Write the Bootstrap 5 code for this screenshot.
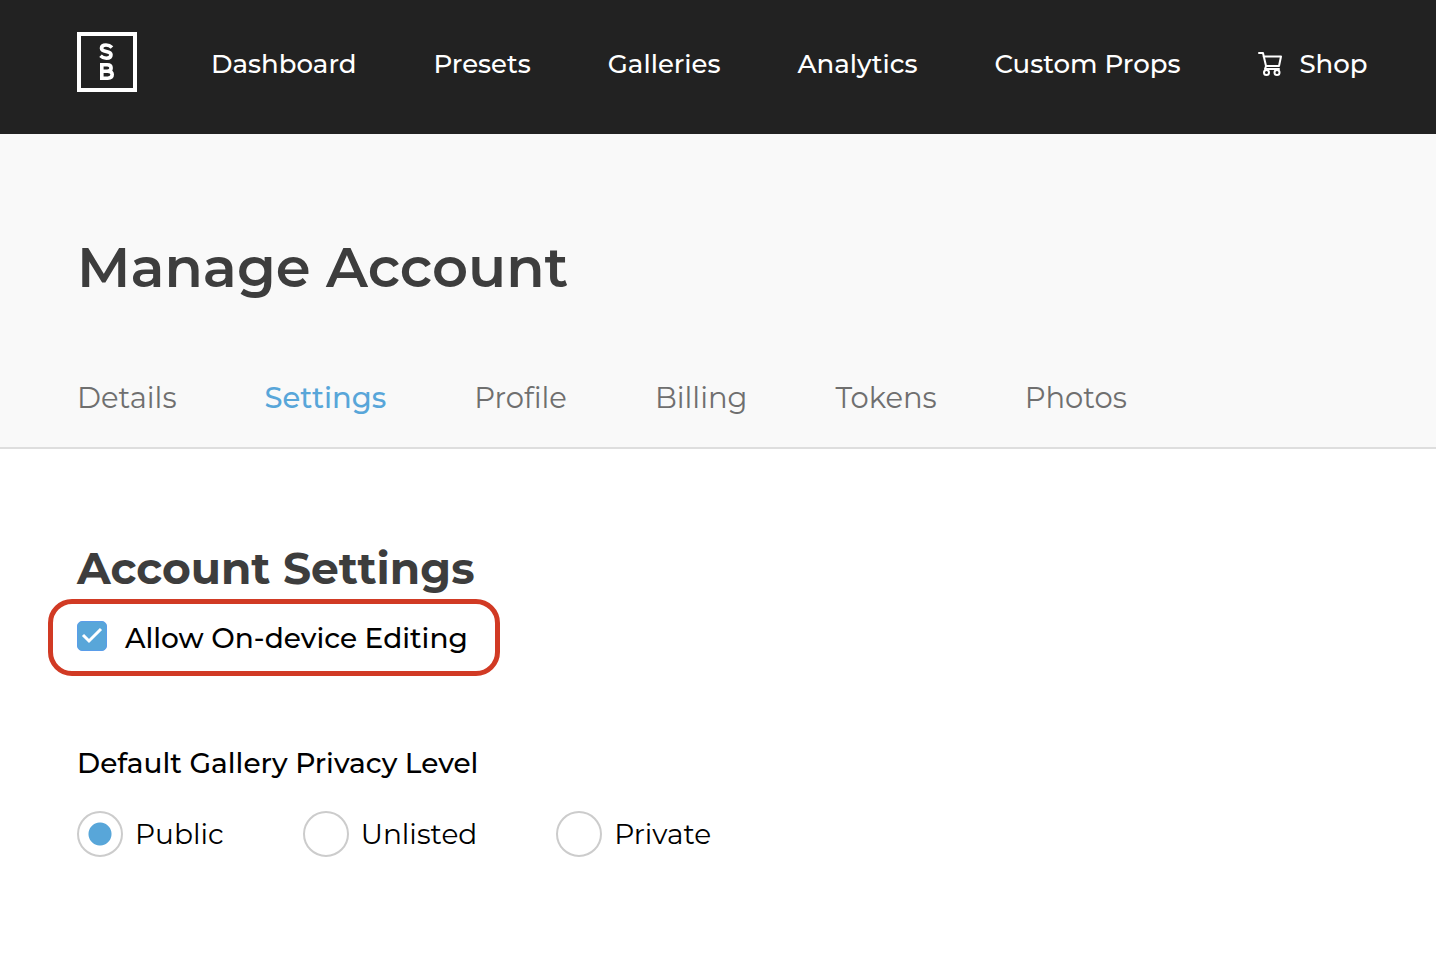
<!DOCTYPE html>
<html lang="en">
<head>
<meta charset="utf-8">
<meta name="viewport" content="width=device-width, initial-scale=1">
<title>Manage Account</title>
<link href="https://cdn.jsdelivr.net/npm/bootstrap@5.3.0/dist/css/bootstrap.min.css" rel="stylesheet">
<style>
  body { font-family: Montserrat, Inter, sans-serif; font-size: 28px; line-height: 36px; color: #000; background: #fff; }
  .gutter { padding-left: 77px; padding-right: 60px; }
  .topbar { background: #222; height: 134px; padding-bottom: 10px; }
  .topbar a { color: #fff; text-decoration: none; white-space: nowrap; }
  .main-links { gap: 77px; margin-left: 74px; padding-top: 4px; font-size: 26px; font-weight: 500; }
  .page-head { background: #f9f9f9; border-bottom: 2px solid #dedede; padding-top: 97px; }
  .page-head h1 { font-size: 56px; line-height: 72px; font-weight: 600; color: #3d3d3d; margin-bottom: 71px; }
  .tabs { gap: 88px; padding-bottom: 25px; font-size: 29px; line-height: 48px; }
  .tabs a { color: #6f6f6f; text-decoration: none; }
  .tabs a.active { color: #58a6d9; font-weight: 500; }
  .settings { padding-top: 92px; }
  .settings h2 { font-size: 44px; line-height: 54px; font-weight: 700; color: #3d3d3d; margin: 0 0 4px; }
  .callout { border: 5px solid #d13a24; border-radius: 24px; width: 452px; height: 77px; margin-left: -29px; padding-left: 24px; font-weight: 500; }
  .callout .form-check-input { width: 30px; height: 30px; margin: 0 18px 4px 0; border-radius: 5px; }
  .callout .form-check-input:checked { background-color: #58a6d9; border-color: #5a9dea; background-size: 30px 30px;
    background-image: url("data:image/svg+xml,%3csvg xmlns='http://www.w3.org/2000/svg' viewBox='0 0 30 30'%3e%3cpath fill='none' stroke='%23fff' stroke-width='3' d='M6 14l6 6L24 8'/%3e%3c/svg%3e"); }
  .privacy { margin-top: 69px; }
  .privacy legend { font-size: 28px; line-height: 36px; font-weight: 500; margin-bottom: 30px; }
  .choices { gap: 79px; }
  .choices .form-check-input { width: 46px; height: 46px; margin: 0 12px 0 0; border: 2px solid #ccc; }
  .choices .form-check-input:checked { background: radial-gradient(circle, #58a6d9 11px, #fff 12px); }
</style>
</head>
<body>
<header class="topbar gutter d-flex align-items-center">
  <a href="#" aria-label="Home">
    <svg class="d-block" width="60" height="60" viewBox="0 0 60 60" aria-hidden="true">
      <rect x="2" y="2" width="56" height="56" fill="none" stroke="#fff" stroke-width="4"/>
      <g fill="none" stroke="#fff" stroke-width="3.600">
        <path d="M35 15.500C33 13.500 31 13 29 13c-3 0-4.500 1.400-4.500 3.300 0 4.700 9.500 1.700 9.500 6.500 0 2.200-1.900 3.400-4.700 3.400-2.300 0-4.300-.9-5.800-2.400"/>
        <path d="M24.800 32.700v13.500h6c2.700 0 4.400-1.300 4.400-3.600 0-2.100-1.700-3.400-4.400-3.400h-6 5.400c2.400 0 3.900-1.200 3.900-3.200s-1.500-3.300-3.900-3.300z"/>
      </g>
    </svg>
  </a>
  <nav class="main-links d-flex" aria-label="Main">
    <a href="#">Dashboard</a>
    <a href="#">Presets</a>
    <a href="#">Galleries</a>
    <a href="#">Analytics</a>
    <a href="#">Custom Props</a>
    <a href="#" class="d-flex align-items-center">
      <svg class="me-3" width="26" height="26" viewBox="0 0 26 26" fill="none" stroke="#fff" stroke-width="2" stroke-linecap="round" stroke-linejoin="round" aria-hidden="true">
        <path d="M2 2h4l3 13-1 3h14M6.500 5.500H24l-2 9.500H9"/>
        <circle cx="9.500" cy="21.500" r="2.500"/><circle cx="20" cy="21.500" r="2.500"/>
      </svg>Shop
    </a>
  </nav>
</header>
<section class="page-head gutter">
  <h1>Manage Account</h1>
  <nav class="tabs d-flex" aria-label="Account">
    <a href="#">Details</a>
    <a href="#" class="active" aria-current="page">Settings</a>
    <a href="#">Profile</a>
    <a href="#">Billing</a>
    <a href="#">Tokens</a>
    <a href="#">Photos</a>
  </nav>
</section>
<main class="settings gutter">
  <h2>Account Settings</h2>
  <div class="callout d-flex align-items-center">
    <input class="form-check-input" type="checkbox" id="editing" checked>
    <label for="editing">Allow On-device Editing</label>
  </div>
  <fieldset class="privacy">
    <legend>Default Gallery Privacy Level</legend>
    <div class="choices d-flex">
      <div class="d-flex align-items-center"><input class="form-check-input" type="radio" name="privacy" id="public" checked><label for="public">Public</label></div>
      <div class="d-flex align-items-center"><input class="form-check-input" type="radio" name="privacy" id="unlisted"><label for="unlisted">Unlisted</label></div>
      <div class="d-flex align-items-center"><input class="form-check-input" type="radio" name="privacy" id="private"><label for="private">Private</label></div>
    </div>
  </fieldset>
</main>
<script src="https://cdn.jsdelivr.net/npm/bootstrap@5.3.0/dist/js/bootstrap.bundle.min.js"></script>
</body>
</html>
